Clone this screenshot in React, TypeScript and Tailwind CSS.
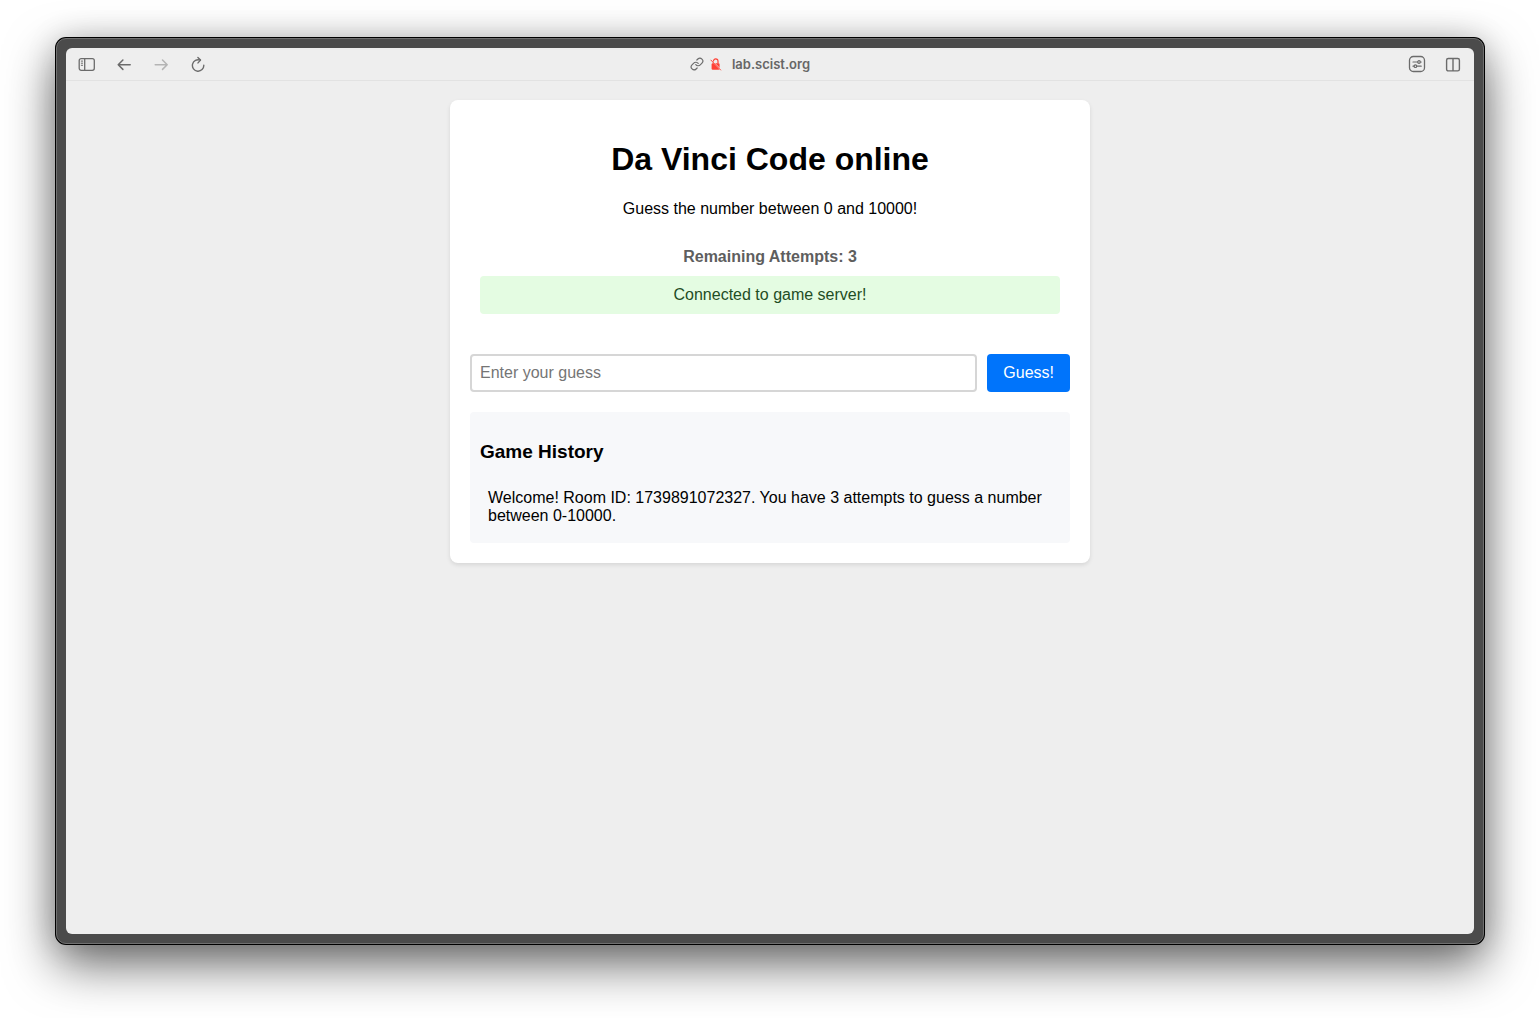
import React, { useState } from "react";
import { Link } from "lucide-react";

function SidebarIcon() {
  return (
    <svg width="17" height="16" viewBox="0 0 17 16" fill="none" stroke="#6b6b6b" strokeWidth="1.3" strokeLinecap="round" aria-hidden="true">
      <rect x="1.2" y="2.6" width="15.1" height="11.7" rx="2" />
      <path d="M6.7 2.6v11.7" />
      <path d="M3.3 5.1h1.3M3.3 7.2h1.3M3.3 9.3h1.3" strokeWidth="1" />
    </svg>
  );
}

function ArrowIcon({ forward = false }: { forward?: boolean }) {
  return (
    <svg width="16" height="16" viewBox="0 0 16 16" fill="none" stroke={forward ? "#b4b4b4" : "#6b6b6b"} strokeWidth="1.5" strokeLinecap="round" strokeLinejoin="round" aria-hidden="true">
      <path d={forward ? "M2.2 8.7h12M9.5 4l4.7 4.7-4.7 4.7" : "M14.2 8.7h-12M6.9 4 2.2 8.7l4.7 4.7"} />
    </svg>
  );
}

function ReloadIcon() {
  return (
    <svg width="16" height="16" viewBox="0 0 16 16" fill="none" stroke="#6b6b6b" strokeWidth="1.4" strokeLinecap="round" strokeLinejoin="round" aria-hidden="true">
      <path d="M10.2 4.2A5.7 5.7 0 1 0 13.8 9.2" />
      <path d="M7.9 1.6 10.5 4.1 8 6.9" />
    </svg>
  );
}

function InsecureLockIcon() {
  return (
    <svg width="12" height="14" viewBox="0 0 12 14" fill="none" aria-hidden="true">
      <rect x="1.6" y="6.2" width="8" height="6.5" rx="1.2" fill="#ff4136" />
      <path d="M3.4 6.5V4.2a2.3 2.3 0 0 1 4.6 0v2.3" stroke="#ff4136" strokeWidth="1.2" />
      <path d="M1.6 3.4 11 13" stroke="#eeeeee" strokeWidth="1.1" />
      <path d="M.9 3.1 10.6 13" stroke="#ff4136" strokeWidth="1" strokeLinecap="round" />
    </svg>
  );
}

function SettingsIcon() {
  return (
    <svg width="18" height="18" viewBox="0 0 18 18" fill="none" stroke="#6b6b6b" strokeWidth="1.3" strokeLinecap="round" aria-hidden="true">
      <rect x="1.5" y="1.5" width="15" height="15" rx="3.8" />
      <path d="M5 7h4.4M12.6 7h.6M5 11.2h.8M9 11.2h4.2" strokeWidth="1.2" />
      <circle cx="11" cy="7" r="1.3" strokeWidth="1.2" />
      <circle cx="7.4" cy="11.2" r="1.3" strokeWidth="1.2" />
    </svg>
  );
}

function SplitIcon() {
  return (
    <svg width="16" height="16" viewBox="0 0 16 16" fill="none" stroke="#6b6b6b" strokeWidth="1.4" aria-hidden="true">
      <rect x="1.6" y="2.5" width="12.8" height="12.4" rx="1.7" />
      <path d="M8 2.5v12.4" />
    </svg>
  );
}

function Toolbar() {
  return (
    <header className="grid h-[33px] grid-cols-[1fr_auto_1fr] items-center border-b border-[#e2e2e2] px-3">
      <nav className="flex items-center gap-[21px]" aria-label="Browser">
        <button type="button" aria-label="Toggle sidebar"><SidebarIcon /></button>
        <button type="button" aria-label="Back"><ArrowIcon /></button>
        <button type="button" aria-label="Forward" disabled><ArrowIcon forward /></button>
        <button type="button" aria-label="Reload"><ReloadIcon /></button>
      </nav>
      <div className="mr-10 flex items-center gap-1.5">
        <button type="button" aria-label="Copy link"><Link size={14} strokeWidth={2} color="#6b6b6b" /></button>
        <InsecureLockIcon />
        <a href="#" className="ml-1 font-[Inter,sans-serif] text-[13px] leading-4 font-semibold text-[#666666]">lab.scist.org</a>
      </div>
      <div className="flex items-center justify-end gap-[19px] pr-px">
        <button type="button" aria-label="Site settings"><SettingsIcon /></button>
        <button type="button" aria-label="Split view"><SplitIcon /></button>
      </div>
    </header>
  );
}

function Game() {
  const [guess, setGuess] = useState("");
  return (
    <section className="mx-auto w-full max-w-[640px] rounded-lg bg-white p-5 shadow-[0_2px_4px_rgba(0,0,0,0.1)]">
      <div className="text-center">
        <h1 className="mt-5 text-[32px] leading-[38px] font-bold">Da Vinci Code online</h1>
        <p className="mt-[22px]">Guess the number between 0 and 10000!</p>
        <div className="mt-5 p-2.5">
          <p className="font-bold text-[#5e5e5e]">Remaining Attempts: 3</p>
          <p role="status" className="mt-2.5 rounded bg-[#e4fce2] p-2.5 text-[#1f4d25]">Connected to game server!</p>
        </div>
      </div>
      <form className="mt-[30px] flex gap-2.5" onSubmit={(e) => e.preventDefault()}>
        <input
          type="text"
          aria-label="Enter your guess"
          placeholder="Enter your guess"
          value={guess}
          onChange={(e) => setGuess(e.target.value)}
          className="h-[38px] min-w-0 flex-1 rounded border-2 border-[#d6d6d6] bg-white px-2 placeholder:text-[#757575]"
        />
        <button type="submit" className="rounded bg-[#0074fb] px-4 text-white">Guess!</button>
      </form>
      <section className="mt-5 rounded bg-[#f7f8fa] p-2.5">
        <h3 className="mt-[19px] text-[19px] leading-[22px] font-bold">Game History</h3>
        <p className="mt-[18px] p-2">Welcome! Room ID: 1739891072327. You have 3 attempts to guess a number between 0-10000.</p>
      </section>
    </section>
  );
}

export default function App() {
  return (
    <div className="flex min-h-screen overflow-hidden bg-white px-14 pt-[38px] pb-[74px] font-['Liberation_Sans',Arial,sans-serif] text-base leading-[18px] text-black">
      <div className="flex flex-1 rounded-[10px] border border-[#707070] bg-[#4b4b4b] p-[9px] shadow-[0_0_0_1px_#000,0_20px_50px_rgba(0,0,0,0.6),0_0_30px_rgba(0,0,0,0.15)]">
        <div className="flex flex-1 flex-col rounded-md bg-[#eeeeee]">
          <Toolbar />
          <main className="flex-1 px-5 pt-[19px] pb-5">
            <Game />
          </main>
        </div>
      </div>
    </div>
  );
}
